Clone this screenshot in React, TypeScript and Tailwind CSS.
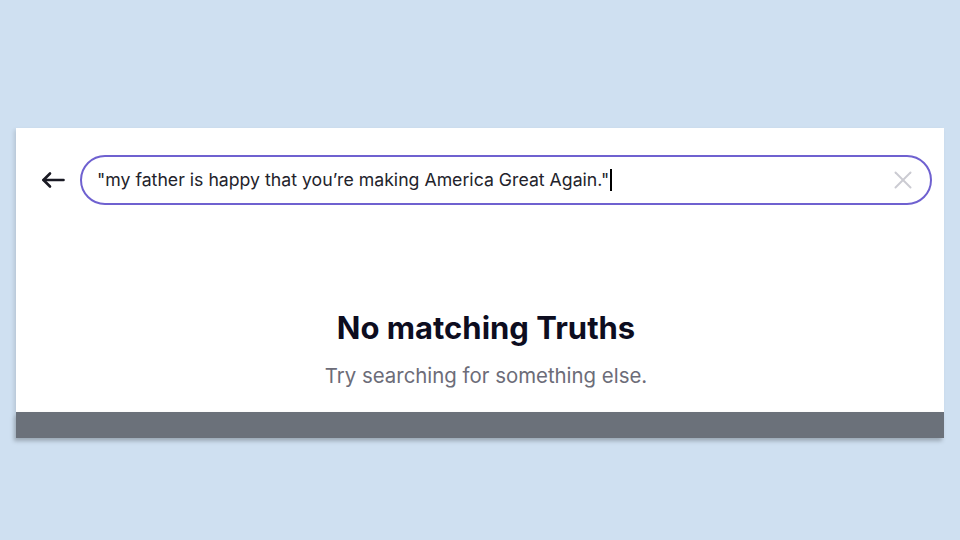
export default function App() {
  return (
    <div
      className="w-[960px] h-[540px] bg-[#cfe0f1] pt-[128px] px-[16px]"
      style={{ fontFamily: "Inter, 'Noto Sans', sans-serif" }}
    >
      {/* 카드 본문 */}
      <div className="bg-white h-[284px] shadow-[-2px_2px_4px_rgba(0,0,0,0.12)] flex flex-col">
        {/* 검색 바 */}
        <div className="flex items-center pt-[27px] pl-[25px] pr-[12px]">
          <button className="w-[24px] h-[24px] flex items-center justify-center text-[#1a1a24]">
            <svg width="24" height="18" viewBox="0 0 24 18" fill="none" stroke="currentColor" strokeWidth="2.6" strokeLinecap="round" strokeLinejoin="round">
              <path d="M2.5 9H22.5" />
              <path d="M9 2.5L2.5 9L9 15.5" />
            </svg>
          </button>
          <div className="ml-[15px] flex-1 h-[50px] rounded-full border-2 border-[#6f61d0] flex items-center pl-[15px] pr-[18px]">
            <span className="text-[17.7px] text-[#23232b]">
              "my father is happy that you’re making America Great Again."
            </span>
            <span className="w-[1.5px] h-[22px] bg-black ml-[1px]" />
            <div className="flex-1" />
            <svg width="18" height="18" viewBox="0 0 18 18" fill="none" stroke="#cbcbd2" strokeWidth="2" strokeLinecap="round">
              <path d="M1.5 1.5L16.5 16.5" />
              <path d="M16.5 1.5L1.5 16.5" />
            </svg>
          </div>
        </div>

        {/* 결과 없음 */}
        <div className="flex flex-col items-center pl-[12px] mt-[105px]">
          <h2 className="text-[31px] leading-[36px] font-bold text-[#0d0d1f]">No matching Truths</h2>
          <p className="mt-[17px] text-[20.4px] leading-[26px] text-[#6c6c78]">Try searching for something else.</p>
        </div>
      </div>

      {/* 하단 바 */}
      <div className="h-[26px] bg-[#6b717a] shadow-[-2px_3px_4px_rgba(0,0,0,0.25)]" />
    </div>
  );
}
